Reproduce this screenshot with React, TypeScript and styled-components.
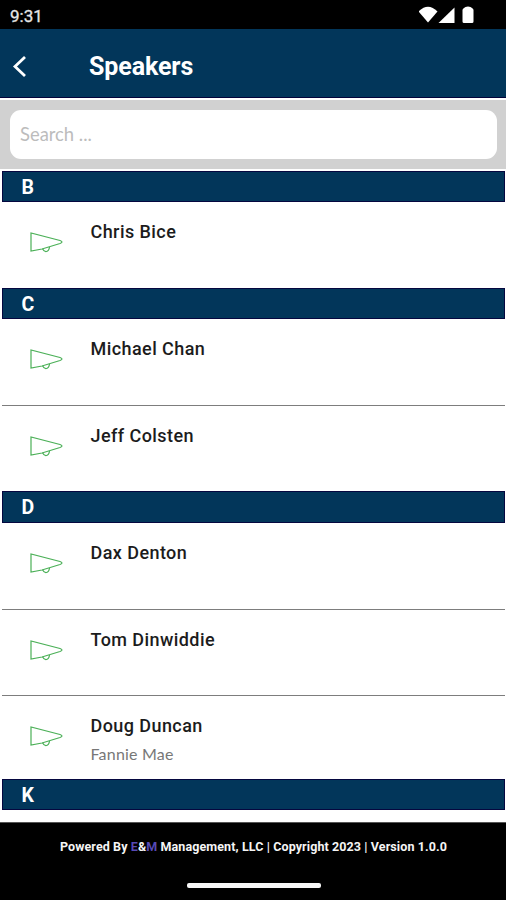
import React from "react";
import styled, { createGlobalStyle } from "styled-components";

const GlobalStyle = createGlobalStyle`
  * { box-sizing: border-box; }
  body { margin: 0; background: #fff; }
`;

const Screen = styled.div`
  width: 506px;
  height: 900px;
  display: flex;
  flex-direction: column;
  overflow: hidden;
  background: #fff;
  font-family: Roboto, sans-serif;
`;

const StatusBar = styled.div`
  flex: none;
  height: 29px;
  padding: 3px 31px 0 10px;
  display: flex;
  justify-content: space-between;
  align-items: flex-start;
  background: #000;
  color: #e6e6e6;
  font-size: 17px;
  line-height: 26px;
  -webkit-text-stroke: 0.3px #e6e6e6;
`;

const StatusIcons = styled.svg`
  display: block;
  width: 56px;
  height: 20px;
`;

const Header = styled.header`
  flex: none;
  height: 69px;
  display: flex;
  align-items: center;
  padding-left: 12px;
  background: #02365a;
  border-bottom: 1px solid #03033a;
`;

const BackIcon = styled.svg`
  display: block;
  width: 16px;
  height: 24px;
  margin: 5px 61px 0 0;
`;

const Title = styled.h1`
  margin: 7px 0 0;
  color: #fff;
  font-size: 25px;
  font-weight: 700;
  line-height: 30px;
  letter-spacing: -0.1px;
`;

const SearchArea = styled.div`
  flex: none;
  height: 69px;
  margin: 2px 0 2px;
  padding: 10px 9px 0 10px;
  background: #d1d1d1;
`;

const SearchField = styled.input`
  display: block;
  width: 100%;
  height: 49px;
  padding: 0 10px 1px;
  border: 0;
  border-radius: 11px;
  outline: 0;
  background: #fff;
  font-family: Lato, sans-serif;
  font-size: 18.4px;
  &::placeholder { color: #bcbcbc; opacity: 1; }
`;

const List = styled.main`
  flex: none;
  height: 651px;
  padding: 0 1px 0 2px;
  overflow: hidden;
`;

const Letter = styled.h2<{ $height: number }>`
  margin: 0;
  height: ${(p) => p.$height}px;
  padding-left: 18.5px;
  background: #02365a;
  border: 1px solid #05073f;
  color: #fff;
  font-size: 19.5px;
  font-weight: 700;
  line-height: 31px;
`;

const Row = styled.div<{ $height: number; $divided?: boolean }>`
  height: ${(p) => p.$height}px;
  display: flex;
  border-bottom: ${(p) => (p.$divided ? "1px solid #7d7d7d" : "0")};
`;

const Megaphone = styled.svg`
  flex: none;
  display: block;
  width: 36px;
  height: 24px;
  margin: 28px 26.5px 0 26px;
`;

const Details = styled.div`
  padding-top: 18px;
`;

const Name = styled.div`
  color: #1c1c1c;
  font-size: 18px;
  font-weight: 500;
  line-height: 24px;
  letter-spacing: 0.43px;
`;

const Company = styled.div`
  margin-top: 5px;
  color: #777;
  font-family: Lato, sans-serif;
  font-size: 16px;
  line-height: 22px;
  letter-spacing: 0.2px;
`;

const Footer = styled.footer`
  flex: 1;
  display: flex;
  flex-direction: column;
  align-items: center;
  background: #000;
  border-top: 1px solid #555;
`;

const Credit = styled.div`
  margin: 14px 0 0 1px;
  color: #f5f5f5;
  font-size: 12.5px;
  font-weight: 700;
  line-height: 20px;
  letter-spacing: 0.1px;
  white-space: pre;
`;

const Brand = styled.span`
  color: #5749b4;
`;

const HomeIndicator = styled.div`
  width: 134px;
  height: 5px;
  margin: 26px 0 0 1px;
  border-radius: 2px;
  background: #f7f7f7;
`;

type Speaker = { name: string; company?: string; height: number; divided?: boolean };
type Section = { letter: string; height: number; speakers: Speaker[] };

const sections: Section[] = [
  { letter: "B", height: 31, speakers: [{ name: "Chris Bice", height: 86 }] },
  {
    letter: "C",
    height: 31,
    speakers: [
      { name: "Michael Chan", height: 87, divided: true },
      { name: "Jeff Colsten", height: 85 },
    ],
  },
  {
    letter: "D",
    height: 32,
    speakers: [
      { name: "Dax Denton", height: 87, divided: true },
      { name: "Tom Dinwiddie", height: 86, divided: true },
      { name: "Doug Duncan", company: "Fannie Mae", height: 83 },
    ],
  },
  { letter: "K", height: 31, speakers: [] },
];

export default function App() {
  return (
    <Screen>
      <GlobalStyle />
      <StatusBar>
        <span>9:31</span>
        <StatusIcons viewBox="0 0 56 20" fill="#fff">
          <path d="M-0.500 8.500 Q9 -1 18.500 8.500 L9 19.500Z" />
          <path d="M19.500 20 L35.500 4.500 V20Z" />
          <path d="M45 5 Q46 3.500 49 3.500 Q52 3.500 53 5 Q54.500 6 54.500 7 V18.500 Q54.500 20 53 20 H45 Q43.500 20 43.500 18.500 V7 Q43.500 6 45 5Z" />
        </StatusIcons>
      </StatusBar>
      <Header>
        <BackIcon viewBox="0 0 16 24" fill="none" stroke="#fff" strokeWidth="2.8">
          <path d="M13 3 L3 12.500 L13 22" />
        </BackIcon>
        <Title>Speakers</Title>
      </Header>
      <SearchArea>
        <SearchField placeholder="Search ..." />
      </SearchArea>
      <List>
        {sections.map((section) => (
          <React.Fragment key={section.letter}>
            <Letter $height={section.height}>{section.letter}</Letter>
            {section.speakers.map((s) => (
              <Row key={s.name} $height={s.height} $divided={s.divided}>
                <Megaphone viewBox="0 0 36 24" fill="none" stroke="#4bb057" strokeWidth="1.2">
                  <path d="M3 3 V21 L14 19 L32 13.500 Q36 12 32 10.500 Z" />
                  <path d="M14.500 18.800 Q16 22 18.500 21.500 Q21 21 21.500 17" />
                </Megaphone>
                <Details>
                  <Name>{s.name}</Name>
                  {s.company && <Company>{s.company}</Company>}
                </Details>
              </Row>
            ))}
          </React.Fragment>
        ))}
      </List>
      <Footer>
        <Credit>
          Powered By <Brand>E</Brand>&amp;<Brand>M</Brand> Management, LLC | Copyright 2023 | Version 1.0.0
        </Credit>
        <HomeIndicator />
      </Footer>
    </Screen>
  );
}
